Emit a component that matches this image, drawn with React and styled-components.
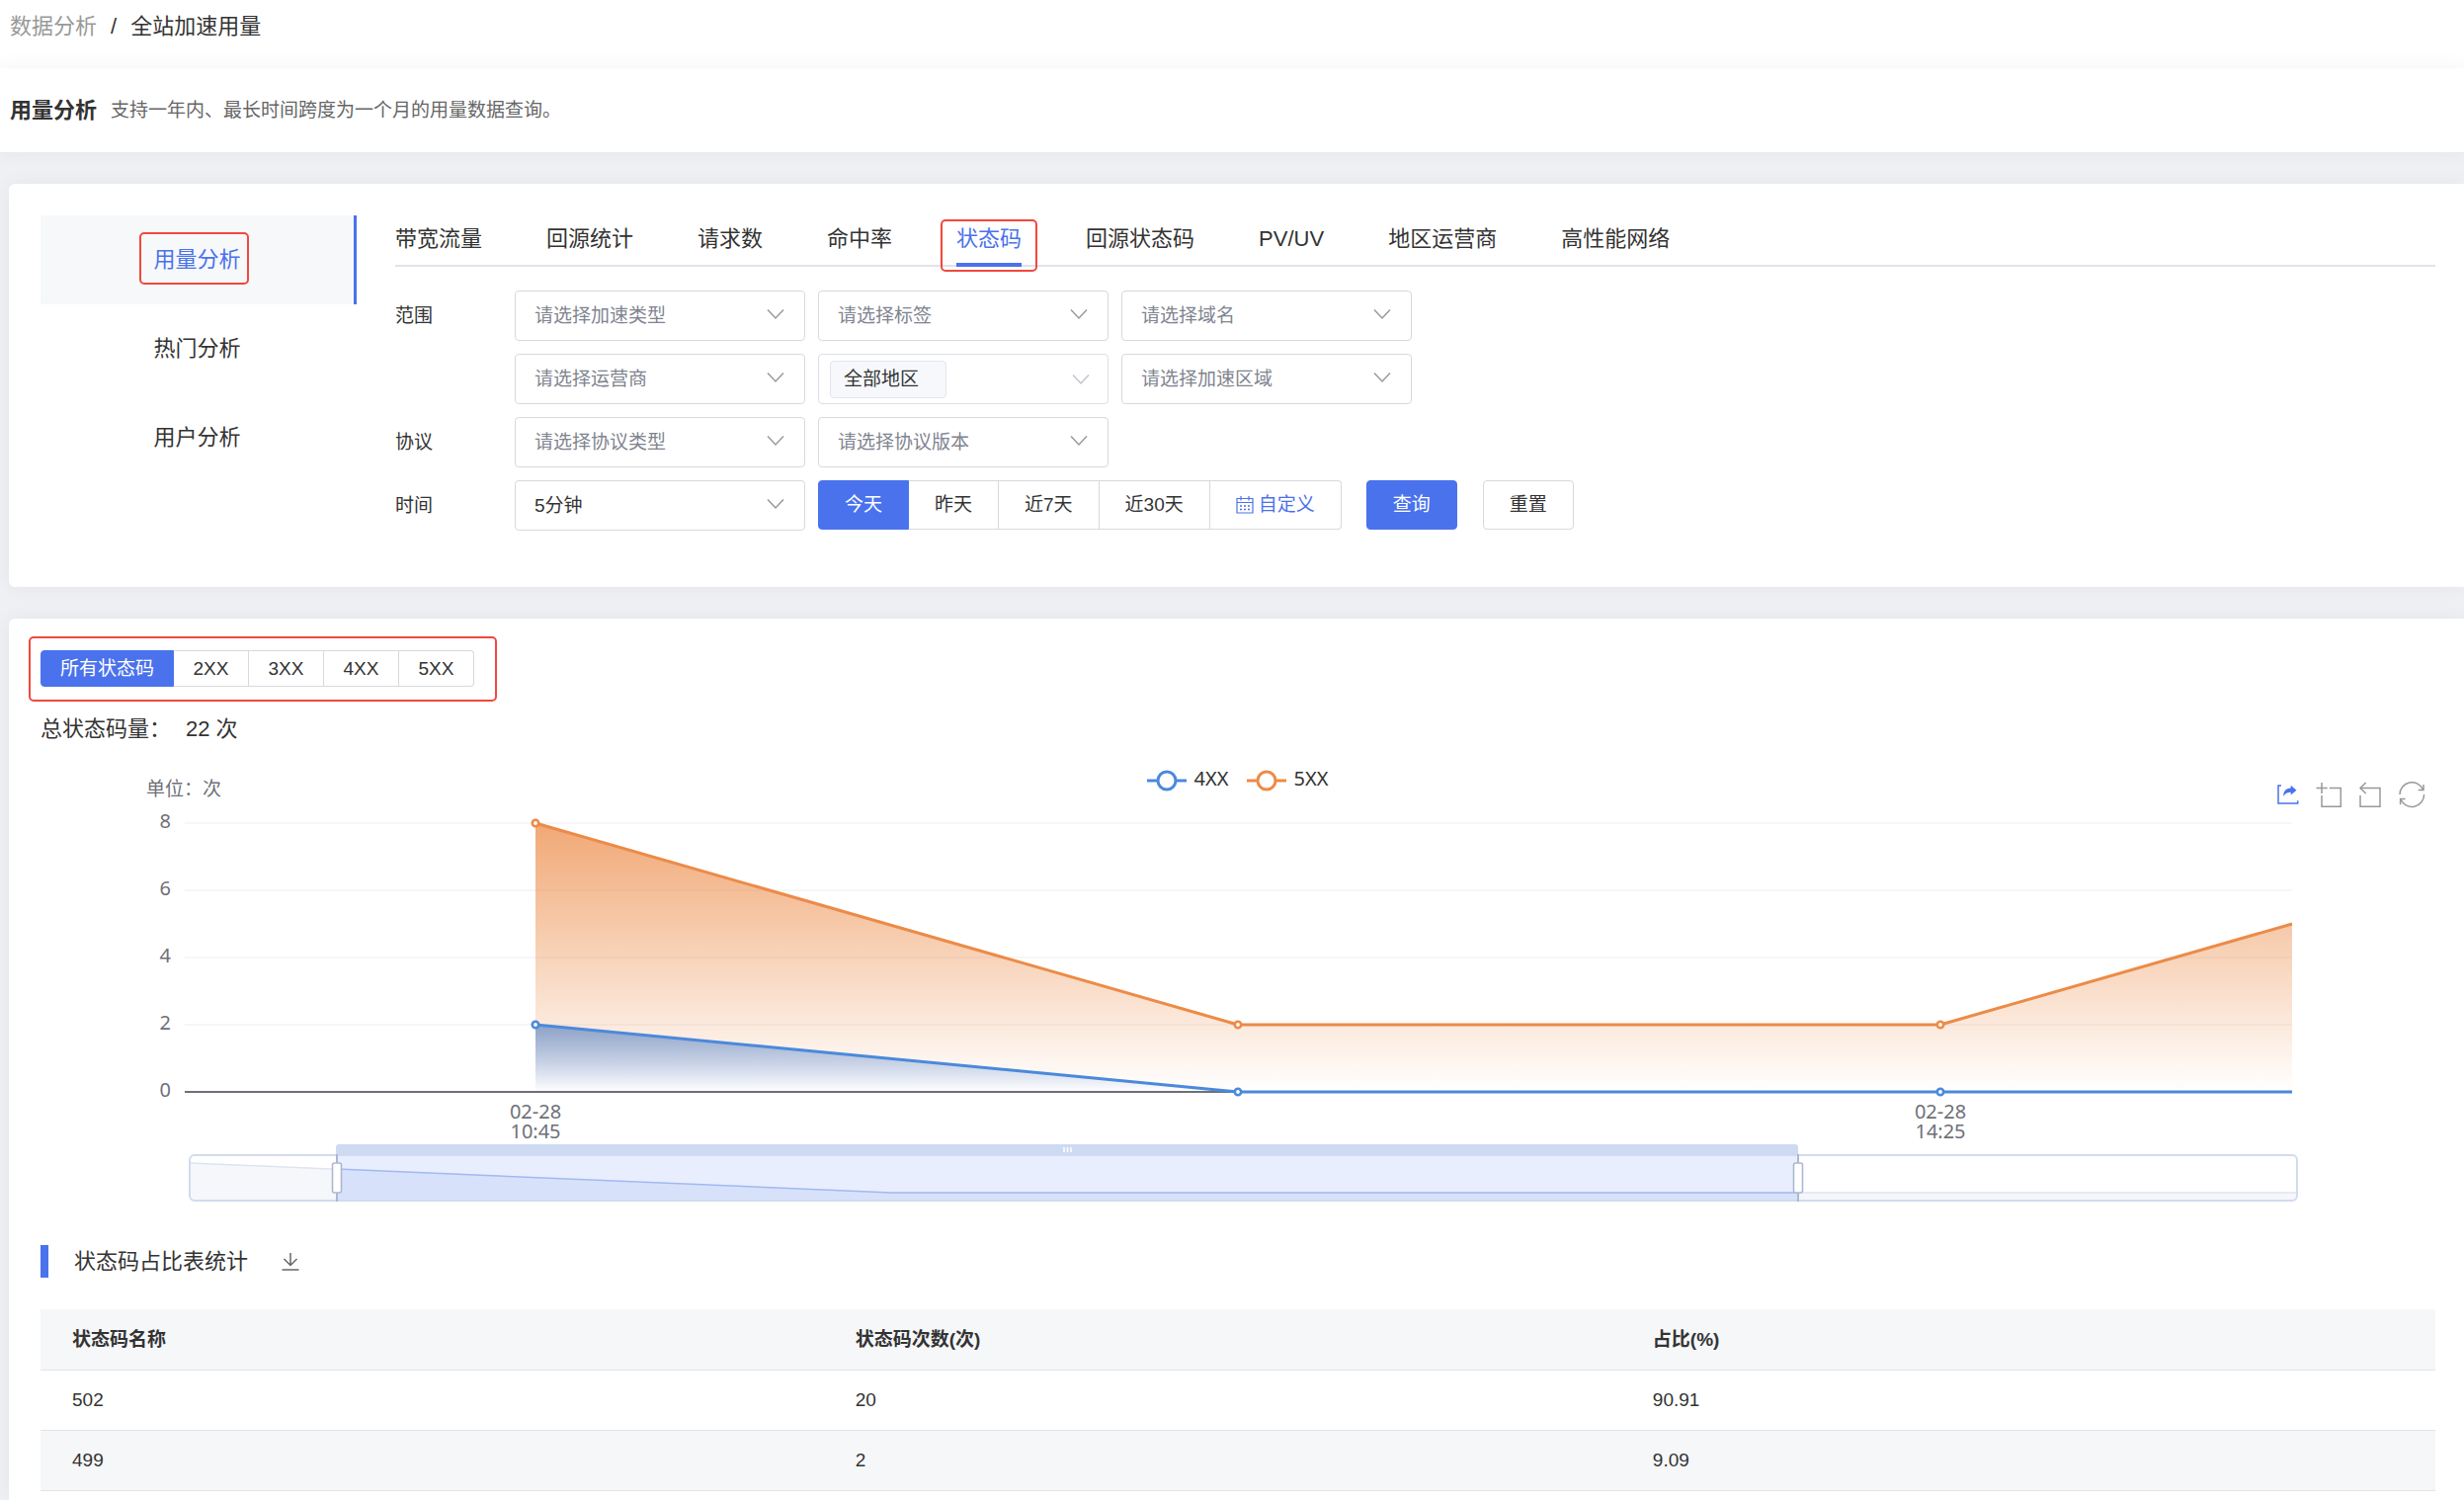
import { useState } from 'react';
import styled, { createGlobalStyle, css } from 'styled-components';

const GlobalStyle = createGlobalStyle`
  * {
    box-sizing: border-box;
  }
  body {
    margin: 0;
    background: #eef0f4;
    color: #333;
    font-family: "Liberation Sans", "Noto Sans CJK SC", sans-serif;
    font-size: 19px;
    line-height: 28px;
  }
  button, select {
    font: inherit;
    color: inherit;
    cursor: pointer;
  }
`;

const blue = '#4a72ec';
const line = '#d7d9dd';

/* red frame drawn round the part of the page being pointed out */
const redFrame = css`
  &::after {
    content: "";
    position: absolute;
    border: 2px solid #f0493e;
    border-radius: 5px;
    pointer-events: none;
  }
`;

const Page = styled.div`
  min-height: 100vh;
  display: flex;
  flex-direction: column;
  overflow: hidden;
`;

const Breadcrumb = styled.nav`
  height: 69px;
  padding: 12px 10px;
  display: flex;
  gap: 14px;
  background: #fff;
  font-size: 22px;
  line-height: 30px;
  & a {
    color: #999;
    text-decoration: none;
  }
`;

const TitleBar = styled.header`
  height: 85px;
  padding: 0 10px;
  display: flex;
  align-items: center;
  gap: 14px;
  background: #fff;
  box-shadow: 0 0 20px rgba(0, 0, 0, 0.05);
`;

const Title = styled.h1`
  margin: 0;
  font-size: 22px;
  font-weight: 700;
`;

const Desc = styled.p`
  margin: 0;
  color: #666;
`;

const Card = styled.section`
  margin: 32px 0 0 9px;
  padding: 32px 29px 0 32px;
  background: #fff;
  border-radius: 6px 0 0 6px;
  box-shadow: 0 0 20px rgba(0, 0, 0, 0.05);
`;

const FilterCard = styled(Card)`
  display: flex;
  gap: 39px;
  padding-bottom: 57px;
`;

const ResultCard = styled(Card)`
  flex: 1;
  border-radius: 6px 0 0 0;
`;

const SideMenu = styled.nav`
  width: 320px;
  flex: none;
`;

const SideLink = styled.a`
  height: 90px;
  display: flex;
  align-items: center;
  justify-content: center;
  border-right: 3px solid ${props => props.$active ? blue : 'transparent'};
  background: ${props => props.$active ? '#f6f8fa' : 'transparent'};
  color: ${props => props.$active ? blue : '#333'};
  font-size: 22px;
  text-decoration: none;
  & span {
    position: relative;
  }
  & span.framed {
    ${redFrame}
  }
  & span.framed::after {
    inset: -14px -8px -11px -14px;
  }
`;

const Main = styled.div`
  flex: 1;
  min-width: 0;
`;

const Tabs = styled.div`
  height: 52px;
  display: flex;
  gap: 65px;
  border-bottom: 2px solid #dfe3e9;
`;

const Tab = styled.button`
  position: relative;
  height: 52px;
  padding: 0;
  border: 0;
  border-bottom: 4px solid ${props => props.$active ? blue : 'transparent'};
  background: none;
  color: ${props => props.$active ? blue : '#333'};
  font-size: 22px;
  white-space: nowrap;
  &.framed {
    ${redFrame}
  }
  &.framed::after {
    inset: 4px -16px -9px -16px;
  }
`;

const Filters = styled.form`
  padding-top: 24px;
  display: grid;
  gap: 13px;
`;

const FilterRow = styled.div`
  display: flex;
  gap: 13px;
`;

const RowLabel = styled.label`
  width: 108px;
  line-height: 51px;
`;

const SelectBox = styled.div`
  position: relative;
  width: 294px;
  height: 51px;
  & select {
    width: 100%;
    height: 100%;
    padding: 0 50px 0 19px;
    appearance: none;
    border: 1px solid ${line};
    border-radius: 4px;
    background: #fff;
    color: ${props => props.$filled ? '#333' : '#80848f'};
  }
  & svg {
    position: absolute;
    right: 20px;
    top: 16px;
    pointer-events: none;
  }
`;

const TagSelect = styled.button`
  width: 294px;
  height: 51px;
  padding: 0 17px 0 11px;
  display: flex;
  align-items: center;
  justify-content: space-between;
  border: 1px solid #dcdfe8;
  border-radius: 4px;
  background: #fff;
`;

const Tag = styled.span`
  width: 118px;
  height: 38px;
  padding: 0 13px;
  border: 1px solid #e3e6ee;
  border-radius: 4px;
  background: #f7f8fb;
  line-height: 36px;
  text-align: left;
`;

const ButtonGroup = styled.div`
  position: relative;
  display: flex;
  width: max-content;
  & button {
    border-radius: 0;
    border-left-width: 0;
  }
  & button:first-child {
    border-left-width: 1px;
    border-radius: 4px 0 0 4px;
  }
  & button:last-child {
    border-radius: 0 4px 4px 0;
  }
`;

const Button = styled.button`
  height: ${props => props.$small ? 37 : 50}px;
  padding: 0 ${props => props.$small ? 19 : 26}px;
  display: flex;
  align-items: center;
  justify-content: center;
  gap: 5px;
  border: 1px solid ${props => props.$primary ? blue : line};
  border-radius: 4px;
  background: ${props => props.$primary ? blue : '#fff'};
  color: ${props => props.$primary ? '#fff' : props.$link ? blue : '#333'};
  white-space: nowrap;
`;

const Actions = styled.div`
  margin-left: 12px;
  display: flex;
  gap: 26px;
`;

const CodeGroup = styled(ButtonGroup)`
  ${redFrame}
  &::after {
    inset: -14px -23px -15px -12px;
  }
  & button {
    min-width: 76px;
  }
`;

const Total = styled.p`
  margin: 28px 0 25px;
  display: flex;
  gap: 15px;
  font-size: 22px;
  line-height: 30px;
`;

const ChartHead = styled.div`
  height: 40px;
  padding: 0 10px 0 107px;
  display: flex;
  justify-content: space-between;
`;

const Unit = styled.span`
  flex: 1;
  color: #6e7079;
  line-height: 42px;
`;

const Legend = styled.ul`
  margin: 0 98px 0 0;
  padding: 0;
  display: flex;
  gap: 18px;
  list-style: none;
  font-family: "Noto Sans", sans-serif;
  font-size: 20px;
  line-height: 20px;
  & li {
    display: flex;
    gap: 8px;
  }
`;

const Tools = styled.div`
  flex: 1;
  display: flex;
  align-items: flex-end;
  justify-content: flex-end;
  gap: 16px;
`;

const ToolButton = styled.button`
  padding: 0;
  border: 0;
  background: none;
  color: ${props => props.$active ? blue : '#999'};
  & svg {
    display: block;
    overflow: visible;
  }
`;

const DownloadButton = styled(ToolButton)`
  color: #666;
`;

const ChartSvg = styled.svg`
  display: block;
  width: 100%;
  height: auto;
  font-family: "Noto Sans", sans-serif;
  font-size: 20px;
`;

const SectionHead = styled.div`
  margin: 41px 0 32px;
  height: 33px;
  padding-left: 26px;
  display: flex;
  align-items: center;
  gap: 34px;
  border-left: 8px solid ${blue};
  & h2 {
    margin: 0;
    font-size: 22px;
    font-weight: 400;
  }
`;

const Table = styled.table`
  width: 100%;
  table-layout: fixed;
  border-collapse: separate;
  border-spacing: 0;
  & th, & td {
    height: 61px;
    padding: 0 32px;
    border-bottom: 1px solid #dfe3ea;
    text-align: left;
  }
  & th {
    height: 62px;
  }
  & th:first-child {
    width: 32.7%;
  }
  & th:nth-child(2) {
    width: 33.3%;
  }
  & th, & tbody tr:nth-child(even) {
    background: #f6f7f9;
  }
`;

const Chevron = ({ color = '#999' }) => (
  <svg width="20" height="16" viewBox="0 0 20 16" fill="none" stroke={color} strokeWidth="1.5">
    <path d="M2 3.5 L10 12 L18 3.5" />
  </svg>
);

const CalendarIcon = () => (
  <svg width="18" height="18" viewBox="0 0 18 18" fill="none" stroke="currentColor" strokeWidth="1.2">
    <path d="M1 2.5 H17 V17 H1 Z M1 6.5 H17 M5 0 V4.5 M13 0 V4.5" />
    <path d="M4 10 H14 M4 13.5 H14" strokeWidth="1.5" strokeDasharray="2 2" />
  </svg>
);

const DownloadIcon = () => (
  <svg width="18" height="18" viewBox="0 0 18 18" fill="none" stroke="currentColor" strokeWidth="1.5">
    <path d="M9 0 V12 M2.5 6 L9 12.5 L15.5 6 M0.5 17 H17.5" />
  </svg>
);

const tools = [
  { name: '分享', body: <>
    <path d="M6 3 H3 V21 H22.7 V18.3" />
    <path d="M15.7 2.7 L21.5 7.7 L15.7 12.5 V9.8 C12 9.8 10 11 8.3 13.9 C8 9 10.5 5.7 15.7 5.5 Z" fill="currentColor" stroke="none" />
  </> },
  { name: '区域缩放', body: <path d="M5 0 V11 M-0.5 5.5 H10.7 M12.7 5.5 H24.3 V24.3 H5 V13" /> },
  { name: '缩放还原', body: <path d="M7.7 0 L2 5.5 L7.7 11 M2 5.5 H22 V24.3 H2 V13" /> },
  { name: '刷新', body: <path d="M0 12 A12.3 12.3 0 0 1 23.5 7 M24 2 V7.5 H18.7 M24.6 12 A12.3 12.3 0 0 1 1 17 M0.6 22.3 V16.5 H5.6" /> },
];

const LegendMark = ({ color }) => (
  <svg width="40" height="24" viewBox="0 0 40 24" stroke={color} strokeWidth="3">
    <path d="M0 12 H40" />
    <circle cx="20" cy="12" r="9" fill="#fff" />
  </svg>
);

const series = [
  { name: '4XX', color: '#4b89dc', values: [2, 0, 0, 0] },
  { name: '5XX', color: '#ec8b47', values: [8, 2, 2, 5] },
];
const pointX = [501, 1212, 1923, 2279];
const yOf = (value) => 287 - value * 34;
const linePath = (values) => 'M' + values.map((v, i) => `${pointX[i]} ${yOf(v)}`).join(' L');

function Chart() {
  return (
    <ChartSvg viewBox="0 0 2424 401" role="img" aria-label="状态码">
      <defs>
        {series.map(s => (
          <linearGradient key={s.name} id={'area' + s.name} x1="0" y1="0" x2="0" y2="1">
            <stop offset="0" stopColor={s.color} stopOpacity="0.75" />
            <stop offset="1" stopColor={s.color} stopOpacity="0" />
          </linearGradient>
        ))}
      </defs>
      {[8, 6, 4, 2, 0].map(v => (
        <g key={v}>
          <path d={`M146 ${yOf(v)} H2279`} stroke={v ? '#f6f6f8' : '#6e7079'} strokeWidth="2" />
          <text x="132" y={yOf(v) + 5} textAnchor="end" fill="#6e7079">{v}</text>
        </g>
      ))}
      {series.map(s => (
        <path key={s.name} d={linePath(s.values) + ' V287 H501 Z'} fill={`url(#area${s.name})`} />
      ))}
      {series.map(s => (
        <g key={s.name} stroke={s.color} fill="none">
          <path d={linePath(s.values)} strokeWidth="3" strokeLinejoin="bevel" />
          {s.values.slice(0, 3).map((v, i) => (
            <circle key={i} cx={pointX[i]} cy={yOf(v)} r="3.2" strokeWidth="2.6" fill="#fff" />
          ))}
        </g>
      ))}
      <g fill="#6e7079" textAnchor="middle">
        <text x="501" y="314">02-28</text>
        <text x="501" y="334">10:45</text>
        <text x="1923" y="314">02-28</text>
        <text x="1923" y="334">14:25</text>
      </g>
      <Zoomer />
    </ChartSvg>
  );
}

/* range slider under the chart, with a small copy of the data behind it */
function Zoomer() {
  return (
    <g>
      <path d="M152 359 L861 389 H2283 V397 H152 Z" fill="#f6f7fb" />
      <path d="M152 359 L861 389 H2283" fill="none" stroke="#dfe4f2" strokeWidth="1.5" />
      <rect x="300" y="350" width="1479" height="48" fill="#e8eefe" />
      <path d="M300 365 L861 389 H1779 V398 H300 Z" fill="#d7e2fa" />
      <path d="M300 365 L861 389 H1779" fill="none" stroke="#a3b8f3" strokeWidth="1.5" />
      <rect x="151" y="351" width="2133" height="46" rx="5" fill="none" stroke="#d2dbee" strokeWidth="2" />
      <path d="M299 351 V343 Q299 340 302 340 H1776 Q1779 340 1779 343 V351 Z" fill="#cedaf2" />
      <path d="M1036 343 V348 M1039.5 343 V348 M1043 343 V348" stroke="#fff" strokeWidth="1.5" />
      {[300, 1779].map(x => (
        <g key={x} stroke="#acb8d1">
          <path d={`M${x} 350 V398`} strokeWidth="2" />
          <rect x={x - 4.5} y="359" width="9" height="30" rx="2" fill="#fff" strokeWidth="1.6" />
        </g>
      ))}
    </g>
  );
}

function Select({ id, text, filled }) {
  return (
    <SelectBox $filled={filled}>
      <select id={id} aria-label={text}>
        <option>{text}</option>
      </select>
      <Chevron />
    </SelectBox>
  );
}

const menu = ['用量分析', '热门分析', '用户分析'];
const tabs = ['带宽流量', '回源统计', '请求数', '命中率', '状态码', '回源状态码', 'PV/UV', '地区运营商', '高性能网络'];
const days = ['今天', '昨天', '近7天', '近30天'];
const codes = ['所有状态码', '2XX', '3XX', '4XX', '5XX'];
const rows = [
  ['502', '20', '90.91'],
  ['499', '2', '9.09'],
];

export default function App() {
  const [tab, setTab] = useState('状态码');
  const [day, setDay] = useState('今天');
  const [code, setCode] = useState('所有状态码');

  return (
    <Page>
      <GlobalStyle />
      <Breadcrumb>
        <a href="#data">数据分析</a>
        <span>/</span>
        <span>全站加速用量</span>
      </Breadcrumb>
      <TitleBar>
        <Title>用量分析</Title>
        <Desc>支持一年内、最长时间跨度为一个月的用量数据查询。</Desc>
      </TitleBar>

      <FilterCard>
        <SideMenu>
          {menu.map((name, i) => (
            <SideLink key={name} href={'#menu' + i} $active={i === 0}>
              <span className={i === 0 ? 'framed' : undefined}>{name}</span>
            </SideLink>
          ))}
        </SideMenu>
        <Main>
          <Tabs role="tablist">
            {tabs.map(name => (
              <Tab
                key={name}
                role="tab"
                aria-selected={tab === name}
                $active={tab === name}
                className={name === '状态码' ? 'framed' : undefined}
                onClick={() => setTab(name)}
              >
                {name}
              </Tab>
            ))}
          </Tabs>
          <Filters onSubmit={(e) => e.preventDefault()}>
            <FilterRow>
              <RowLabel htmlFor="speedType">范围</RowLabel>
              <Select id="speedType" text="请选择加速类型" />
              <Select text="请选择标签" />
              <Select text="请选择域名" />
            </FilterRow>
            <FilterRow>
              <RowLabel as="span" />
              <Select text="请选择运营商" />
              <TagSelect type="button" aria-haspopup="listbox">
                <Tag>全部地区</Tag>
                <Chevron color="#c0c4cc" />
              </TagSelect>
              <Select text="请选择加速区域" />
            </FilterRow>
            <FilterRow>
              <RowLabel htmlFor="protocol">协议</RowLabel>
              <Select id="protocol" text="请选择协议类型" />
              <Select text="请选择协议版本" />
            </FilterRow>
            <FilterRow>
              <RowLabel htmlFor="step">时间</RowLabel>
              <Select id="step" text="5分钟" filled />
              <ButtonGroup>
                {days.map(name => (
                  <Button key={name} type="button" $primary={day === name} onClick={() => setDay(name)}>{name}</Button>
                ))}
                <Button type="button" $link><CalendarIcon />自定义</Button>
              </ButtonGroup>
              <Actions>
                <Button type="submit" $primary>查询</Button>
                <Button type="reset">重置</Button>
              </Actions>
            </FilterRow>
          </Filters>
        </Main>
      </FilterCard>

      <ResultCard>
        <CodeGroup>
          {codes.map(name => (
            <Button key={name} type="button" $small $primary={code === name} onClick={() => setCode(name)}>{name}</Button>
          ))}
        </CodeGroup>
        <Total>
          <span>总状态码量：</span>
          <span>22 次</span>
        </Total>
        <ChartHead>
          <Unit>单位：次</Unit>
          <Legend>
            {series.map(s => (
              <li key={s.name}><LegendMark color={s.color} />{s.name}</li>
            ))}
          </Legend>
          <Tools>
            {tools.map((tool, i) => (
              <ToolButton key={tool.name} type="button" aria-label={tool.name} $active={i === 0}>
                <svg width="26" height="26" viewBox="0 0 26 26" fill="none" stroke="currentColor" strokeWidth="1.5">{tool.body}</svg>
              </ToolButton>
            ))}
          </Tools>
        </ChartHead>
        <Chart />
        <SectionHead>
          <h2>状态码占比表统计</h2>
          <DownloadButton type="button" aria-label="下载"><DownloadIcon /></DownloadButton>
        </SectionHead>
        <Table>
          <thead>
            <tr>
              <th>状态码名称</th>
              <th>状态码次数(次)</th>
              <th>占比(%)</th>
            </tr>
          </thead>
          <tbody>
            {rows.map(row => (
              <tr key={row[0]}>
                {row.map(cell => <td key={cell}>{cell}</td>)}
              </tr>
            ))}
          </tbody>
        </Table>
      </ResultCard>
    </Page>
  );
}
